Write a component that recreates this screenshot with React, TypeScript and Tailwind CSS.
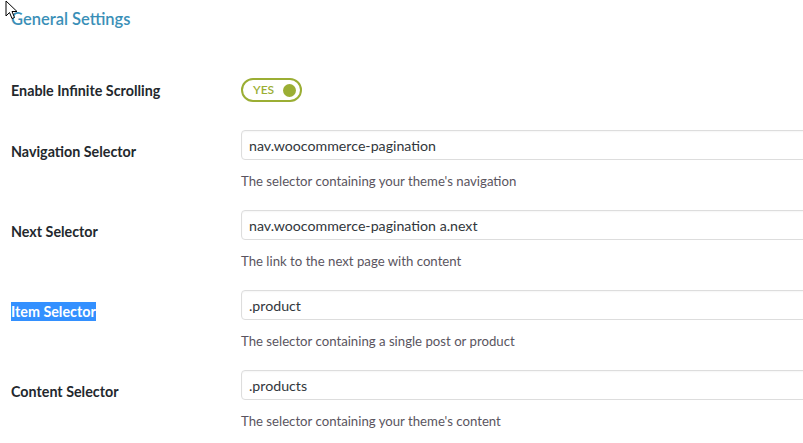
import React from "react";

const rows = [
  { label: "Navigation Selector", value: "nav.woocommerce-pagination", desc: "The selector containing your theme's navigation" },
  { label: "Next Selector", value: "nav.woocommerce-pagination a.next", desc: "The link to the next page with content" },
  { label: "Item Selector", value: ".product", desc: "The selector containing a single post or product", selected: true },
  { label: "Content Selector", value: ".products", desc: "The selector containing your theme's content" },
];

function Cursor() {
  return (
    <svg className="absolute left-[5px] top-0" width="16" height="20" viewBox="0 0 16 20">
      <path d="M1 1 L1 16 L4.5 12.5 L7 18.5 L9.5 17.5 L7 11.5 L12 11.5 Z" fill="#fff" stroke="#000" strokeWidth="1" strokeLinejoin="miter" />
    </svg>
  );
}

export default function App() {
  return (
    <div
      className="relative w-[803px] h-[443px] overflow-hidden bg-white text-[13px]"
      style={{ fontFamily: "Lato, 'Noto Sans', sans-serif" }}
    >
      <h2 className="pl-[11px] pt-[8px] text-[16.5px] font-semibold leading-[22px] text-[#3a8fb7]">General Settings</h2>

      <div className="mt-[34px]">
        <div className="flex h-[51px] items-start">
          <div className="w-[241px] shrink-0 pl-[11px] pt-[19px] text-[14.3px] font-bold leading-[16px] text-[#23282d]">Enable Infinite Scrolling</div>
          <div className="pt-[14px]">
            <div className="flex h-[24px] w-[61px] items-center justify-between rounded-full border-2 border-[#9bae34] pl-[10px] pr-[4px]">
              <span className="text-[12px] font-semibold text-[#9bae34]">YES</span>
              <span className="h-[13px] w-[13px] rounded-full bg-[#9bae34]" />
            </div>
          </div>
        </div>

        {rows.map((r) => (
          <div key={r.label} className="flex h-[80px] items-start">
            <div className="w-[241px] shrink-0 pl-[11px] pt-[29px] text-[14.3px] leading-[16px]">
              <span
                className={
                  r.selected
                    ? "bg-[#3390ff] py-[1px] font-bold text-white"
                    : "font-bold text-[#23282d]"
                }
              >
                {r.label}
              </span>
            </div>
            <div className="pt-[15px]">
              <input
                readOnly
                value={r.value}
                className="h-[30px] w-[700px] rounded-[4px] border border-[#dddddd] px-[7px] text-[14.2px] text-[#32373c] outline-none shadow-[inset_0_1px_2px_rgba(0,0,0,0.04)]"
                style={{ fontFamily: "Lato, 'Noto Sans', sans-serif" }}
              />
              <p className="mt-[13px] text-[13.2px] leading-[16px] text-[#5a5560]">{r.desc}</p>
            </div>
          </div>
        ))}
      </div>

      <Cursor />
    </div>
  );
}
